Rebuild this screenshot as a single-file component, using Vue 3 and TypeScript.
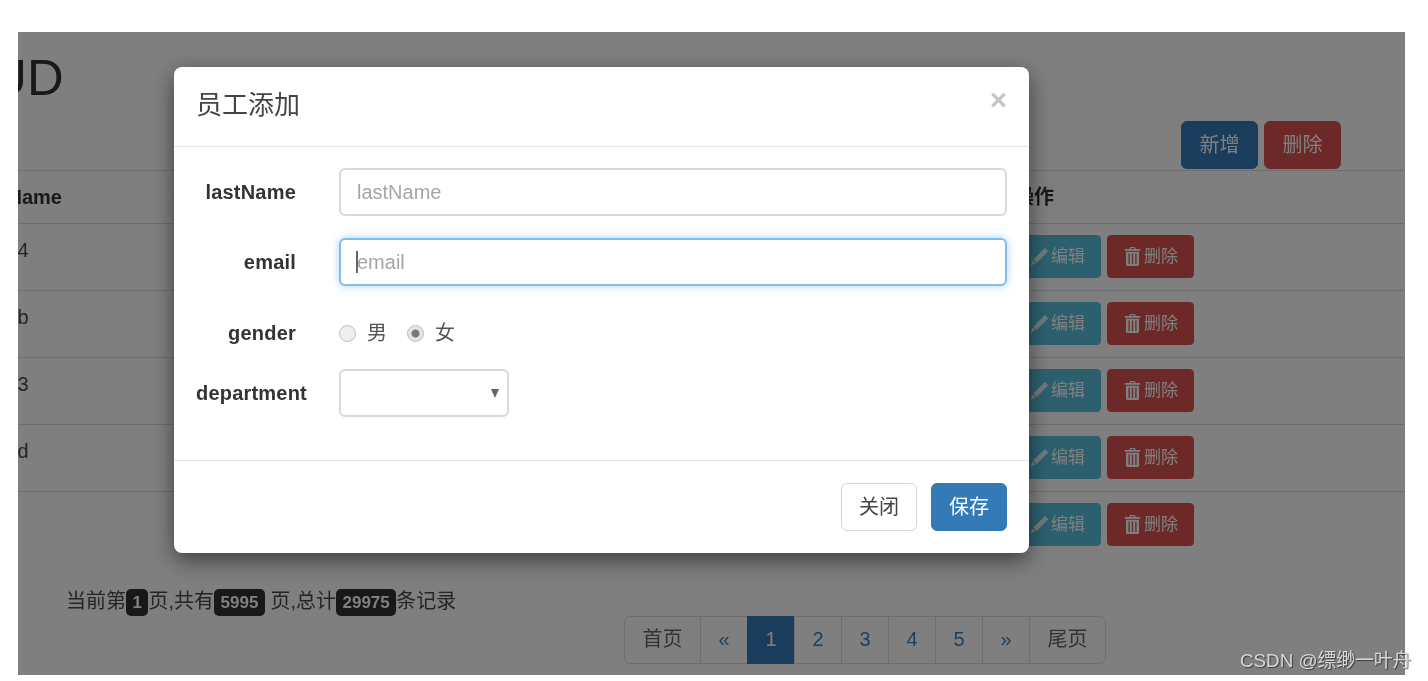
<script setup lang="ts">
const rows: string[] = ['a7ea4', 'a2e1b', '5e1a3', 'b93ed', '']
const pages: number[] = [1, 2, 3, 4, 5]
</script>

<template>
  <div class="shot">
    <div class="frame">
      <div class="page">
        <h1 class="title">SSM-CRUD</h1>
        <div class="actions">
          <button class="btn primary">新增</button>
          <button class="btn danger">删除</button>
        </div>
        <table class="table">
          <colgroup>
            <col class="c-id" />
            <col class="c-name" />
            <col />
            <col />
            <col />
            <col class="c-op" />
          </colgroup>
          <thead>
            <tr>
              <th>#</th>
              <th>lastName</th>
              <th>gender</th>
              <th>email</th>
              <th>department</th>
              <th>操作</th>
            </tr>
          </thead>
          <tbody>
            <tr v-for="(r, i) in rows" :key="i">
              <td>{{ r ? i + 1 : '' }}</td>
              <td>{{ r }}</td>
              <td>{{ r ? 'M' : '' }}</td>
              <td>{{ r ? r + '@mail.com' : '' }}</td>
              <td>{{ r ? '开发部' : '' }}</td>
              <td class="ops">
                <button class="btn sm info">
                  <svg class="ico pencil" viewBox="0 0 16 16"><path d="M12.600 .8 15.400 3.600 5.600 13.400 2.800 10.600zM2.300 11.400 4.800 13.900 .6 15.400z" /></svg>
                  编辑
                </button>
                <button class="btn sm danger">
                  <svg class="ico" viewBox="0 0 16 16"><path d="M6 0h4l.7 1.600h3.800v1.500h-13V1.600h3.800zM6.900 .8l-.3.8h2.800l-.3-.8zM2.500 4h11v10.800c0 .7-.5 1.200-1.200 1.200H3.700c-.7 0-1.200-.5-1.200-1.200zM4.600 5.400v9h1.100v-9zM7.450 5.400v9h1.100v-9zM10.300 5.400v9h1.100v-9z" fill-rule="evenodd" /></svg>
                  删除
                </button>
              </td>
            </tr>
          </tbody>
        </table>
        <div class="foot">
          <div class="info-text">当前第<span class="badge">1</span>页,共有<span class="badge">5995</span> 页,总计<span class="badge">29975</span>条记录</div>
          <ul class="pager">
            <li>首页</li>
            <li class="link">«</li>
            <li v-for="p in pages" :key="p" class="link" :class="{ active: p === 1 }">{{ p }}</li>
            <li class="link">»</li>
            <li>尾页</li>
          </ul>
        </div>
      </div>
      <div class="backdrop"></div>
    </div>

    <div class="modal">
      <header class="m-head">
        <h4>员工添加</h4>
        <span class="close">×</span>
      </header>
      <form class="m-body">
        <div class="group">
          <label class="lbl">lastName</label>
          <input class="ctl" type="text" placeholder="lastName" />
        </div>
        <div class="group">
          <label class="lbl">email</label>
          <div class="focus-wrap">
            <input class="ctl focus" type="text" placeholder="email" />
            <span class="caret"></span>
          </div>
        </div>
        <div class="group radios">
          <label class="lbl">gender</label>
          <div class="radio-line">
            <label class="radio"><input type="radio" name="g" />男</label>
            <label class="radio"><input type="radio" name="g" checked />女</label>
          </div>
        </div>
        <div class="group last">
          <label class="lbl">department</label>
          <div class="select-wrap">
            <select class="sel"></select>
          </div>
        </div>
      </form>
      <footer class="m-foot">
        <button class="btn default">关闭</button>
        <button class="btn primary">保存</button>
      </footer>
    </div>

    <div class="mark">CSDN @缥缈一叶舟</div>
  </div>
</template>

<style>
html, body { margin: 0; background: #fff; }
</style>

<style scoped>
.shot {
  position: relative;
  width: 1428px;
  height: 681px;
  overflow: hidden;
  padding: 32px 23px 6px 18px;
  box-sizing: border-box;
  background: #fff;
  font-family: "Liberation Sans", "Noto Sans CJK SC", sans-serif;
  font-size: 20px;
  line-height: 28px;
  color: #333;
  filter: blur(.5px);
}
.frame {
  position: relative;
  height: 100%;
  overflow: hidden;
  background: #fff;
}
.backdrop {
  position: absolute;
  inset: 0;
  background: rgba(0, 0, 0, .5);
}
.page {
  width: 1627px;
  margin-left: -249px;
  padding-left: 9px;
  box-sizing: content-box;
}
.title {
  margin: 0 0 0 -9px;
  padding: 18px 0 0 21px;
  height: 60px;
  font-size: 50.8px;
  line-height: 56px;
  font-weight: 400;
}
.actions {
  display: flex;
  justify-content: flex-end;
  gap: 6px;
  padding-right: 64px;
  margin-top: 11px;
  height: 49px;
}
.btn {
  height: 48px;
  width: 77px;
  padding: 0;
  border: 1.5px solid transparent;
  border-radius: 6px;
  font: inherit;
  box-sizing: border-box;
}
.primary { background: #337ab7; border-color: #337ab7; color: #fff; }
.danger { background: #d9534f; border-color: #d9534f; color: #fff; }
.info { background: #5bc0de; border-color: #5bc0de; color: #fff; }
.default { background: #fff; border-color: #d5d5d5; color: #444; }
.btn.sm {
  display: inline-flex;
  align-items: center;
  justify-content: center;
  gap: 2px;
  width: 87px;
  height: 43px;
  font-size: 17px;
  border-radius: 4px;
}
.ico { width: 19px; height: 19px; fill: currentColor; }
.pencil { opacity: .85; }
.table {
  width: 100%;
  table-layout: fixed;
  border-collapse: collapse;
}
.c-id { width: 184px; }
.c-name { width: 200px; }
.c-op { width: 402px; }
.table th, .table td {
  padding: 12px 11px 11px;
  text-align: left;
  vertical-align: top;
  border-top: 1px solid #ddd;
  white-space: nowrap;
}
.table th { padding: 12px 11px 12px; font-weight: 700; }
.table td { height: 67px; box-sizing: border-box; color: #4a4a4a; }
.table td.ops { padding-top: 11px; }
.ops .btn + .btn { margin-left: 6px; }
.foot {
  display: flex;
  align-items: flex-start;
  padding-left: 288px;
}
.info-text {
  width: 558px;
  padding-top: 28px;
  white-space: nowrap;
  color: #4a4a4a;
}
.badge {
  display: inline-block;
  height: 27px;
  padding: 0 6.500px;
  border-radius: 5px;
  background: #303030;
  color: #fff;
  font-size: 17px;
  font-weight: 700;
  line-height: 27px;
}
.pager {
  display: flex;
  list-style: none;
  margin: 57px 0 0;
  padding: 0;
  height: 48px;
}
.pager li {
  width: 77px;
  box-sizing: border-box;
  margin-left: -1px;
  border: 1.5px solid #ddd;
  background: #fff;
  text-align: center;
  line-height: 45px;
  color: #666;
}
.pager li:first-child { margin-left: 0; border-radius: 6px 0 0 6px; }
.pager li:last-child { border-radius: 0 6px 6px 0; }
.pager li.link { width: 48px; color: #3f7fba; }
.pager li.active { background: #337ab7; border-color: #337ab7; color: #fff; }

.modal {
  position: absolute;
  left: 174px;
  top: 67px;
  width: 855px;
  height: 486px;
  box-sizing: border-box;
  background: #fff;
  border-radius: 8px;
  box-shadow: 0 7px 21px rgba(0, 0, 0, .5);
  display: flex;
  flex-direction: column;
}
.m-head {
  display: flex;
  align-items: flex-start;
  justify-content: space-between;
  height: 80px;
  padding: 20px 22px 0;
  box-sizing: border-box;
  border-bottom: 1.5px solid #e5e5e5;
}
.m-head h4 {
  margin: 0;
  font-size: 26px;
  line-height: 36px;
  font-weight: 400;
  color: #444;
}
.close {
  margin: -3px 0 0 0;
  font-size: 29px;
  line-height: 32px;
  font-weight: 700;
  color: #c4c4c4;
}
.m-body {
  height: 313px;
  padding: 21px 22px 0;
  box-sizing: border-box;
}
.group {
  display: flex;
  align-items: flex-start;
  gap: 43px;
  margin-bottom: 22px;
}
.group.radios { height: 39px; }
.group.radios .lbl { padding-top: 11px; }
.lbl {
  flex: none;
  width: 100px;
  padding-top: 10px;
  text-align: right;
  white-space: nowrap;
  font-weight: 700;
  letter-spacing: .2px;
}
.ctl {
  flex: 1;
  width: 100%;
  height: 48px;
  box-sizing: border-box;
  padding: 0 16px;
  border: 2px solid #d8d8d8;
  border-radius: 6px;
  outline: none;
  background: #fff;
  font: inherit;
  color: #555;
}
.ctl::placeholder { color: #a6a6a6; opacity: 1; }
.ctl.focus {
  border-color: #80bdf0;
  box-shadow: 0 0 9px rgba(102, 175, 233, .55);
}
.focus-wrap {
  position: relative;
  flex: 1;
  display: flex;
}
.caret {
  position: absolute;
  left: 17px;
  top: 13px;
  width: 2px;
  height: 22px;
  background: #666;
}
.radio-line {
  display: flex;
  gap: 20px;
  padding-top: 11px;
}
.radio {
  display: inline-flex;
  align-items: center;
  gap: 11px;
  color: #555;
}
.radio input {
  appearance: none;
  width: 17px;
  height: 17px;
  margin: 0;
  border-radius: 50%;
  border: 1.5px solid #bdbdbd;
  background: #eee;
  box-sizing: border-box;
}
.radio input:checked {
  background: radial-gradient(circle, #777 0 3.500px, #e4e4e4 4.500px);
}
.select-wrap {
  position: relative;
  width: 170px;
  height: 48px;
}
.select-wrap::after {
  content: "";
  position: absolute;
  right: 10px;
  top: 20px;
  border-left: 4.500px solid transparent;
  border-right: 4.500px solid transparent;
  border-top: 9px solid #666;
}
.sel {
  appearance: none;
  width: 100%;
  height: 100%;
  box-sizing: border-box;
  border: 2px solid #d8d8d8;
  border-radius: 6px;
  background: #fff;
}
.m-foot {
  display: flex;
  justify-content: flex-end;
  gap: 14px;
  flex: 1;
  padding: 22px 22px 0;
  box-sizing: border-box;
  border-top: 1.5px solid #e5e5e5;
}
.m-foot .btn { width: 76px; }

.mark {
  position: absolute;
  left: 1240px;
  top: 648px;
  font-size: 18.800px;
  line-height: 26px;
  color: #d8d8d8;
  text-shadow: 1px 1px 1px rgba(0, 0, 0, .55);
  white-space: nowrap;
}
</style>
